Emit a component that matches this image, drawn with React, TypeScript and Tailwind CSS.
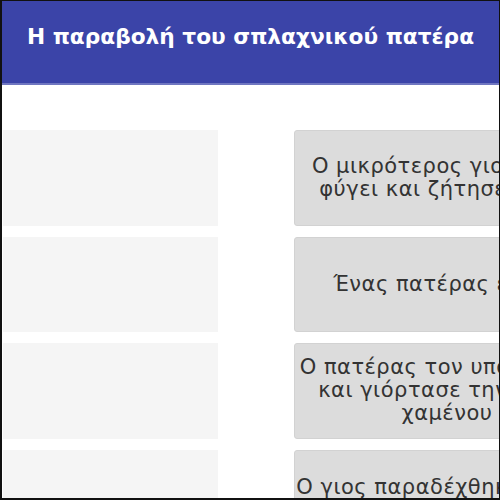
import React from "react";

const rows: { lines: string[]; h: string }[] = [
  { lines: ["Ο μικρότερος γιος του ζήτησε να", "φύγει και ζήτησε το μερίδιό του"], h: "h-[95.5px]" },
  { lines: ["Ένας πατέρας είχε δύο γιους."], h: "h-[95.5px]" },
  { lines: ["Ο πατέρας τον υποδέχτηκε με χαρά", "και γιόρτασε την επιστροφή του", "χαμένου γιου του"], h: "h-[95.5px]" },
  { lines: ["Ο γιος παραδέχθηκε το σφάλμα του,", "ζήτησε συγχώρεση και", "επέστρεψε στο σπίτι."], h: "h-[122px]" },
];

export default function App() {
  return (
    <div
      className="w-[500px] h-[500px] overflow-hidden bg-white border-l-2 border-t border-r border-b-2 border-[#111]"
      style={{ fontFamily: '"DejaVu Sans", Verdana, sans-serif' }}
    >
      <div className="h-[84px] bg-[#3b44a8] border-b-2 border-[#6f76c0] flex items-center pl-[25px] pb-[10px]">
        <h1 className="text-white font-bold text-[21.7px] whitespace-nowrap">Η παραβολή του σπλαχνικού πατέρα</h1>
      </div>
      <div className="pt-[45px] flex flex-col gap-[11px] w-[900px] pl-px">
        {rows.map((row, i) => (
          <div key={i} className={`flex gap-[76px] shrink-0 ${row.h}`}>
            <div className="w-[215px] shrink-0 bg-[#f5f5f5]" />
            <div className="w-[406px] shrink-0 bg-[#dcdcdc] rounded-[3px] border border-[#d2d2d2] flex flex-col items-center justify-center text-[21px] tracking-[0.5px] leading-[23px] text-[#333] text-center">
              {row.lines.map((l, j) => (
                <div key={j} className="whitespace-nowrap">{l}</div>
              ))}
            </div>
          </div>
        ))}
      </div>
    </div>
  );
}
